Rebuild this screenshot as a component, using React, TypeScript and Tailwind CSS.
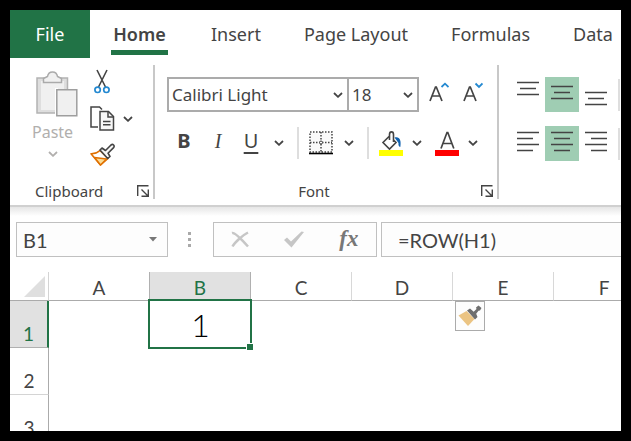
import React from "react";

const tabs = ["Insert", "Page Layout", "Formulas", "Data"];
const columns = ["A", "B", "C", "D", "E", "F"];
const rows = [1, 2, 3];

function Chevron({ className = "text-[#444]" }: { className?: string }) {
  return (
    <svg width="10" height="6" viewBox="0 0 10 6" className={className} aria-hidden="true">
      <path d="M1 1l4 3.800L9 1" fill="none" stroke="currentColor" strokeWidth="1.8" />
    </svg>
  );
}

function MenuButton({ label }: { label: string }) {
  return (
    <button type="button" aria-label={label} className="flex h-8 w-4 items-center justify-center">
      <Chevron />
    </button>
  );
}

function Launcher({ label }: { label: string }) {
  return (
    <button type="button" aria-label={label}>
      <svg width="12" height="12" viewBox="0 0 12 12" className="block" fill="none" stroke="#444" strokeWidth="1.4">
        <path d="M.7 11V.7H11.5M4.5 4.5l6 6M11.3 4.5v6.8H4.5" />
      </svg>
    </button>
  );
}

function PasteIcon() {
  return (
    <svg width="42" height="46" viewBox="0 0 42 46" fill="#f0f0f0" stroke="#b3b3b3" strokeWidth="1.5">
      <path d="M1 7h30.500v35H1z" fill="#dedede" />
      <path d="M5 10h23v29H5z" stroke="none" />
      <path d="M7.500 11.500V7.500l4-2C12.500-.500 20.500-.500 21.500 5.500l4 2v4z" stroke="#aaa" />
      <path d="M19 17h3v28h-3z" fill="#fff" stroke="none" />
      <path d="M20.800 18.800h20v26h-20z" stroke="#9e9e9e" />
    </svg>
  );
}

function CutIcon() {
  return (
    <svg width="16" height="25" viewBox="0 0 16 25" fill="none">
      <path d="M3 1l8.500 17M13 1L4.500 18" stroke="#444" strokeWidth="1.6" />
      <circle cx="3.600" cy="20.800" r="2.700" stroke="#2489d1" strokeWidth="1.700" />
      <circle cx="12.400" cy="20.800" r="2.700" stroke="#2489d1" strokeWidth="1.700" />
    </svg>
  );
}

function CopyIcon() {
  return (
    <svg width="25" height="25" viewBox="0 0 25 25" fill="#fff" stroke="#444" strokeWidth="1.500">
      <path d="M8 21H1V1h8.500l2.500 2.500" />
      <path d="M10 5.500h8.500l5 5V24H10z" fill="#f7f7f7" />
      <path d="M18 5.500v5.500h5.500M13 15.500h7.500M13 18.800h7.500" fill="none" />
    </svg>
  );
}

function PainterIcon() {
  return (
    <svg width="25" height="24" viewBox="0 0 25 24" fill="none" strokeLinejoin="round">
      <path d="M10 7.500Q6 11 1 10.800L10.500 22l7.500-6.500z" fill="#fff" stroke="#e07000" strokeWidth="1.600" />
      <path d="M4.500 14.500l12 1.500-6 6z" fill="#fbdc95" stroke="#e07000" strokeWidth="1.500" />
      <path d="M10 7l2-2 3.500 2.500 5.500-5.500c2-1.500 4 .700 2.600 2.600L18 10.200l2 3.300-2.300 2z" fill="#f7f7f7" stroke="#444" strokeWidth="1.600" />
    </svg>
  );
}

function BordersIcon() {
  return (
    <svg width="24" height="24" viewBox="0 0 24 24" fill="none">
      <path d="M1 1h22v20H1zM12 1v20M1 11.500h22" fill="#fafafa" stroke="#444" strokeWidth="1.500" strokeDasharray="1.500 1.500" />
      <circle cx="12" cy="11.500" r="1.500" fill="#fff" stroke="#444" />
      <path d="M0 22.500h24" stroke="#000" strokeWidth="1.600" />
    </svg>
  );
}

function FillIcon() {
  return (
    <svg width="24" height="25" viewBox="0 0 24 25" fill="none">
      <path d="M10.500 5L4 11.500l6.500 6.500 6.500-6.500-3-3M10.500 9V3.500c0-3.500 4-3.500 4 0V11" stroke="#444" strokeWidth="1.600" />
      <path d="M15.500 6.500c5-1.500 7 2.500 5.800 9.500-1.800-.500-2-2-1.800-4z" fill="#1062b0" />
      <path d="M0 19h24v6H0z" fill="#ff0" />
    </svg>
  );
}

function FontColorIcon() {
  return (
    <svg width="24" height="25" viewBox="0 0 24 25" fill="none">
      <path d="M6 17.500L12 1.500h.800l6 16M8 12.500h9" stroke="#444" strokeWidth="1.700" />
      <path d="M0 19h24v6H0z" fill="#f00" />
    </svg>
  );
}

function FontSizeIcon({ d }: { d: string }) {
  return (
    <svg width="20" height="26" viewBox="0 0 20 26" fill="none">
      <path d="M1 19L6.500 5h.800L13 19M3 14h8" stroke="#444" strokeWidth="1.700" />
      <path d={d} stroke="#2489d1" strokeWidth="1.800" />
    </svg>
  );
}

function AlignIcon({ d }: { d: string }) {
  return (
    <svg width="22" height="35" viewBox="0 0 22 35" fill="none" stroke="#444" strokeWidth="1.600">
      <path d={d} />
    </svg>
  );
}

const alignRows = [
  [
    { label: "Top Align", d: "M0 5.500h22M3 11.500h16M0 17.500h22", on: false },
    { label: "Middle Align", d: "M0 9.500h22M3 15.500h16M0 21.500h22", on: true },
    { label: "Bottom Align", d: "M0 15.500h22M3 21.500h16M0 27.500h22", on: false },
  ],
  [
    { label: "Align Left", d: "M0 6.500h22M0 12.500h16M0 18.500h22M0 24.500h16", on: false },
    { label: "Center", d: "M0 6.500h22M3 12.500h16M0 18.500h22M3 24.500h16", on: true },
    { label: "Align Right", d: "M0 6.500h22M6 12.500h16M0 18.500h22M6 24.500h16", on: false },
  ],
];

function Divider() {
  return <span className="h-8 w-0.5 shrink-0 bg-[#dedede]" />;
}

function Combo({ label, value, className }: { label: string; value: string; className: string }) {
  return (
    <label className={`relative flex h-[35px] items-center border-2 border-[#ababab] ${className}`}>
      <select
        aria-label={label}
        defaultValue={value}
        className="h-full w-full appearance-none bg-white pl-[3px] text-[17px] leading-6 text-[#444] outline-none"
      >
        <option>{value}</option>
      </select>
      <span className="pointer-events-none absolute right-1">
        <Chevron />
      </span>
    </label>
  );
}

function ClipboardGroup() {
  return (
    <section className="flex w-[145px] shrink-0 flex-col justify-between border-r-2 border-[#c8c8c8]">
      <div className="flex pt-1 pl-[22px]">
        <button type="button" className="flex w-12 flex-col items-start pt-0.5 text-[#b1afad]">
          <span className="ml-1">
            <PasteIcon />
          </span>
          <span className="mt-[3px] text-base leading-6">Paste</span>
          <Chevron className="mt-[7px] ml-4 text-[#b1afad]" />
        </button>
        <div className="ml-2.5 flex flex-col items-start gap-3">
          <button type="button" aria-label="Cut" className="ml-1">
            <CutIcon />
          </button>
          <div className="flex items-center gap-2">
            <button type="button" aria-label="Copy">
              <CopyIcon />
            </button>
            <button type="button" aria-label="Copy options">
              <Chevron />
            </button>
          </div>
          <button type="button" aria-label="Format Painter">
            <PainterIcon />
          </button>
        </div>
      </div>
      <div className="flex items-center justify-between pr-1 pl-[25px] text-[15px] leading-4">
        <span>Clipboard</span>
        <Launcher label="Clipboard settings" />
      </div>
    </section>
  );
}

function FontGroup() {
  return (
    <section className="flex w-[344px] shrink-0 flex-col border-r-2 border-[#c8c8c8] pl-3">
      <div className="mt-3 flex items-center">
        <Combo label="Font" value="Calibri Light" className="w-[182px]" />
        <Combo label="Font size" value="18" className="-ml-0.5 w-[72px]" />
        <button type="button" aria-label="Increase Font Size" className="ml-2.5">
          <FontSizeIcon d="M12.500 5l3.500-3.300L19.500 5" />
        </button>
        <button type="button" aria-label="Decrease Font Size" className="ml-3.5">
          <FontSizeIcon d="M12.500 1.500L16 5l3.500-3.500" />
        </button>
      </div>
      <div className="mt-[15px] flex items-center text-xl leading-7">
        <button type="button" className="w-[34px] pb-1 font-bold">B</button>
        <button type="button" className="w-[34px] pb-1 font-[Liberation_Serif,serif] italic">I</button>
        <button type="button" className="w-8 pb-1 underline underline-offset-4">U</button>
        <span className="ml-1 flex items-center gap-2.5">
          <MenuButton label="Underline options" />
          <Divider />
          <button type="button" aria-label="Borders">
            <BordersIcon />
          </button>
        </span>
        <span className="ml-2 flex items-center gap-2.5">
          <MenuButton label="Border options" />
          <Divider />
          <button type="button" aria-label="Fill Color">
            <FillIcon />
          </button>
        </span>
        <span className="ml-1.5 flex items-center gap-2.5">
          <MenuButton label="Fill options" />
          <button type="button" aria-label="Font Color">
            <FontColorIcon />
          </button>
        </span>
        <span className="ml-1.5 flex">
          <MenuButton label="Font color options" />
        </span>
      </div>
      <div className="mt-auto flex items-center pr-1 text-[15px] leading-4">
        <span className="flex-1 pr-5 text-center">Font</span>
        <Launcher label="Font settings" />
      </div>
    </section>
  );
}

function AlignmentGroup() {
  return (
    <section className="flex min-w-0 flex-1 flex-col gap-3.5 overflow-hidden pt-3 pl-3">
      {alignRows.map((group, i) => (
        <div key={i} className="flex items-center">
          {group.map((item) => (
            <button
              key={item.label}
              type="button"
              aria-label={item.label}
              aria-pressed={item.on}
              className={`flex w-[34px] shrink-0 justify-center ${item.on ? "bg-[#9fcdb3]" : ""}`}
            >
              <AlignIcon d={item.d} />
            </button>
          ))}
          <span className="ml-[5px] flex">
            <Divider />
          </span>
        </div>
      ))}
    </section>
  );
}

function FormulaBar() {
  return (
    <div className="bg-[linear-gradient(#e6e6e6,#fff_9px)] pt-[15px] pb-[15px] pl-1.5">
      <div className="flex h-[35px] font-[Lato,sans-serif] text-xl text-[#444]">
        <div className="flex w-[152px] shrink-0 items-center border border-[#c0c0c0] bg-[#fdfdfd]">
          <input aria-label="Name Box" defaultValue="B1" className="w-full min-w-0 pl-1.5 outline-none" />
          <button type="button" aria-label="Name Box options" className="px-2.5">
            <svg width="8" height="5" viewBox="0 0 8 5">
              <path d="M0 0h8L4 4.500z" fill="#777" />
            </svg>
          </button>
        </div>
        <div className="flex w-[45px] shrink-0 flex-col items-center justify-center gap-[3px] pr-0.5">
          <span className="size-[3px] bg-[#aaa]" />
          <span className="size-[3px] bg-[#aaa]" />
          <span className="size-[3px] bg-[#aaa]" />
        </div>
        <div className="flex w-[164px] shrink-0 items-center justify-around border border-[#c0c0c0] bg-[#fdfdfd]">
          <button type="button" aria-label="Cancel">
            <svg width="18" height="17" viewBox="0 0 18 17" fill="none" stroke="#c6c6c6" strokeWidth="2.500">
              <path d="M1 2c3-1 12 9 16 13.500M17 1.500C12 4 4 11 1.500 15.500" />
            </svg>
          </button>
          <button type="button" aria-label="Enter">
            <svg width="20" height="17" viewBox="0 0 20 17">
              <path d="M0 9l3-2.500 4 4L17.500.500 20 1 7.500 16.500z" fill="#c6c6c6" />
            </svg>
          </button>
          <button
            type="button"
            aria-label="Insert Function"
            className="pb-0.5 font-[Liberation_Serif,serif] text-[23px] leading-7 font-bold text-[#777] italic"
          >
            fx
          </button>
        </div>
        <input
          aria-label="Formula"
          defaultValue="=ROW(H1)"
          className="ml-1 min-w-0 flex-1 border border-r-0 border-[#c0c0c0] bg-[#fdfdfd] pl-4 outline-none"
        />
      </div>
    </div>
  );
}

function Sheet() {
  return (
    <div className="min-h-0 flex-1 overflow-hidden">
      <table className="w-[645px] table-fixed border-separate border-spacing-0 font-[Lato,sans-serif] text-[19px] leading-6 text-[#444]">
        <thead>
          <tr className="h-[29px]">
            <th className="w-[39px] border-r border-b border-r-[#d4d4d4] border-b-[#ababab] p-0">
              <svg width="21" height="21" viewBox="0 0 21 21" className="ml-auto mr-[3px] block">
                <path d="M21 0v21H0z" fill="#dfdfdf" />
              </svg>
            </th>
            {columns.map((col) => (
              <th
                key={col}
                scope="col"
                className={`border-r border-b border-b-[#ababab] p-0 pt-1 font-normal ${
                  col === "B" ? "bg-[#e1e1e1] text-[#217346]" : ""
                } ${col === "A" || col === "B" ? "border-r-[#b0b0b0]" : "border-r-[#d8d8d8]"}`}
              >
                {col}
              </th>
            ))}
          </tr>
        </thead>
        <tbody>
          {rows.map((row) => (
            <tr key={row} className="h-[47px]">
              <th
                scope="row"
                className={`border-b p-0 pb-px align-bottom font-normal ${
                  row === 1
                    ? "border-r-2 border-r-[#217346] border-b-[#b0b0b0] bg-[#e1e1e1] text-[#217346]"
                    : "border-r border-r-[#ababab] border-b-[#d4d4d4]"
                }`}
              >
                {row}
              </th>
              {columns.map((col) => (
                <td key={col} className="relative p-0 text-center">
                  {row === 1 && col === "B" && (
                    <>
                      <span className="text-[32px] leading-10 font-light text-black">1</span>
                      <span className="absolute -top-0.5 -right-px -bottom-px -left-0.5 border-2 border-[#217346]" />
                      <span className="absolute -right-0.5 -bottom-0.5 size-[7px] border-t border-l border-white bg-[#217346]" />
                    </>
                  )}
                  {row === 1 && col === "E" && (
                    <button
                      type="button"
                      aria-label="Formatting options"
                      className="absolute top-0 left-0.5 flex size-[30px] items-center justify-center border border-[#ababab] bg-[#fdfdfd]"
                    >
                      <svg width="24" height="22" viewBox="0 0 24 22">
                        <path d="M8.500 6L.500 10.500 10 21l6.500-7z" fill="#ebc483" />
                        <path d="M9 5.500l3-2 3.700 3.200L18.500 4l-.500-1.500 2.500-2L23.500 3 22 5.500l-1.500.300-2.300 3 1.300 3.200-2.500 2.500z" fill="#6e6e6e" />
                      </svg>
                    </button>
                  )}
                </td>
              ))}
            </tr>
          ))}
        </tbody>
      </table>
    </div>
  );
}

export default function App() {
  return (
    <div className="flex h-screen flex-col overflow-hidden border-10 border-black bg-white font-[Noto_Sans,sans-serif] text-[#444]">
      <nav className="flex h-12 shrink-0 overflow-hidden text-lg leading-6 whitespace-nowrap">
        <button type="button" className="w-20 shrink-0 bg-[#217346] text-white">File</button>
        <div className="ml-[21px] flex items-start gap-[43px] pt-3">
          <button type="button" className="min-w-[57px] border-b-5 border-[#217346] pb-1 font-semibold">
            Home
          </button>
          {tabs.map((tab) => (
            <button key={tab} type="button">
              {tab}
            </button>
          ))}
        </div>
      </nav>
      <div className="flex h-[149px] shrink-0 border-b-2 border-[#d0d0d0] pt-[7px] pb-1.5">
        <ClipboardGroup />
        <FontGroup />
        <AlignmentGroup />
      </div>
      <FormulaBar />
      <Sheet />
    </div>
  );
}
